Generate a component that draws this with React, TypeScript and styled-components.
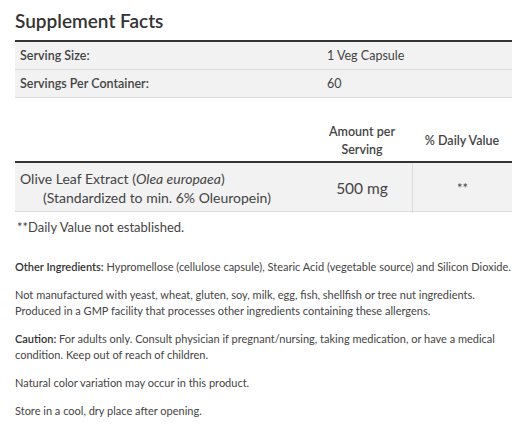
import React from "react";
import styled, { createGlobalStyle } from "styled-components";

const Global = createGlobalStyle`
  html, body { margin: 0; padding: 0; background: #fff; }
  body { font-family: "Lato", "Noto Sans", sans-serif; color: #444; }
`;

const Page = styled.div`
  width: 527px;
  padding: 8px 15px 0 15px;
  box-sizing: border-box;
`;

const Title = styled.h2`
  margin: 0 0 7px 0;
  font-size: 19px;
  line-height: 25px;
  font-weight: 600;
  color: #333;
`;

const Table = styled.div`
  width: 497px;
  border-top: 2px solid #333;
`;

const InfoRow = styled.div`
  display: grid;
  grid-template-columns: 312px 1fr;
  height: 27px;
  align-items: center;
  background: #f2f2f2;
  border-bottom: 1px solid #dcdcdc;
  font-size: 12.5px;
  color: #444;
`;

const InfoLabel = styled.div`
  padding-left: 5px;
  font-weight: 600;
`;

const InfoValue = styled.div``;

const HeadRow = styled.div`
  display: grid;
  grid-template-columns: 297px 100px 100px;
  margin-top: 23px;
  height: 40px;
  align-items: center;
  border-bottom: 2px solid #333;
  font-size: 12.5px;
  font-weight: 600;
  color: #444;
`;

const HeadCell = styled.div`
  text-align: center;
  line-height: 18px;
`;

const DataRow = styled.div`
  display: grid;
  grid-template-columns: 297px 100px 100px;
  background: #f2f2f2;
  border-bottom: 1px solid #dcdcdc;
  height: 48px;
  font-size: 14px;
  color: #444;
`;

const NameCell = styled.div`
  padding: 6px 5px;
  line-height: 19px;
`;

const Indent = styled.div`
  padding-left: 23px;
`;

const ValueCell = styled.div<{ $divider?: boolean; $large?: boolean }>`
  display: flex;
  align-items: center;
  justify-content: center;
  font-size: ${(p) => (p.$large ? "15.5px" : "13px")};
  border-left: ${(p) => (p.$divider ? "1px solid #dcdcdc" : "none")};
`;

const Footnote = styled.div`
  padding: 7px 2px 6px;
  font-size: 13px;
  color: #444;
`;

const Notes = styled.div`
  margin-top: 18px;
  font-size: 11px;
  line-height: 16px;
  color: #444;
`;

const Para = styled.p`
  margin: 0 0 12px 0;
`;

const Strong = styled.strong`
  font-weight: 600;
  color: #333;
`;

export default function App() {
  return (
    <Page>
      <Global />
      <Title>Supplement Facts</Title>
      <Table>
        <InfoRow>
          <InfoLabel>Serving Size:</InfoLabel>
          <InfoValue>1 Veg Capsule</InfoValue>
        </InfoRow>
        <InfoRow>
          <InfoLabel>Servings Per Container:</InfoLabel>
          <InfoValue>60</InfoValue>
        </InfoRow>
      </Table>
      <HeadRow>
        <div />
        <HeadCell>
          Amount per
          <br />
          Serving
        </HeadCell>
        <HeadCell>% Daily Value</HeadCell>
      </HeadRow>
      <DataRow>
        <NameCell>
          Olive Leaf Extract (<em>Olea europaea</em>)
          <Indent>(Standardized to min. 6% Oleuropein)</Indent>
        </NameCell>
        <ValueCell $large>500 mg</ValueCell>
        <ValueCell $divider>**</ValueCell>
      </DataRow>
      <Footnote>**Daily Value not established.</Footnote>
      <Notes>
        <Para>
          <Strong>Other Ingredients:</Strong> Hypromellose (cellulose capsule), Stearic Acid (vegetable source) and Silicon Dioxide.
        </Para>
        <Para>
          Not manufactured with yeast, wheat, gluten, soy, milk, egg, fish, shellfish or tree nut ingredients.
          <br />
          Produced in a GMP facility that processes other ingredients containing these allergens.
        </Para>
        <Para>
          <Strong>Caution:</Strong> For adults only. Consult physician if pregnant/nursing, taking medication, or have a medical condition. Keep out of reach of children.
        </Para>
        <Para>Natural color variation may occur in this product.</Para>
        <Para>Store in a cool, dry place after opening.</Para>
      </Notes>
    </Page>
  );
}
